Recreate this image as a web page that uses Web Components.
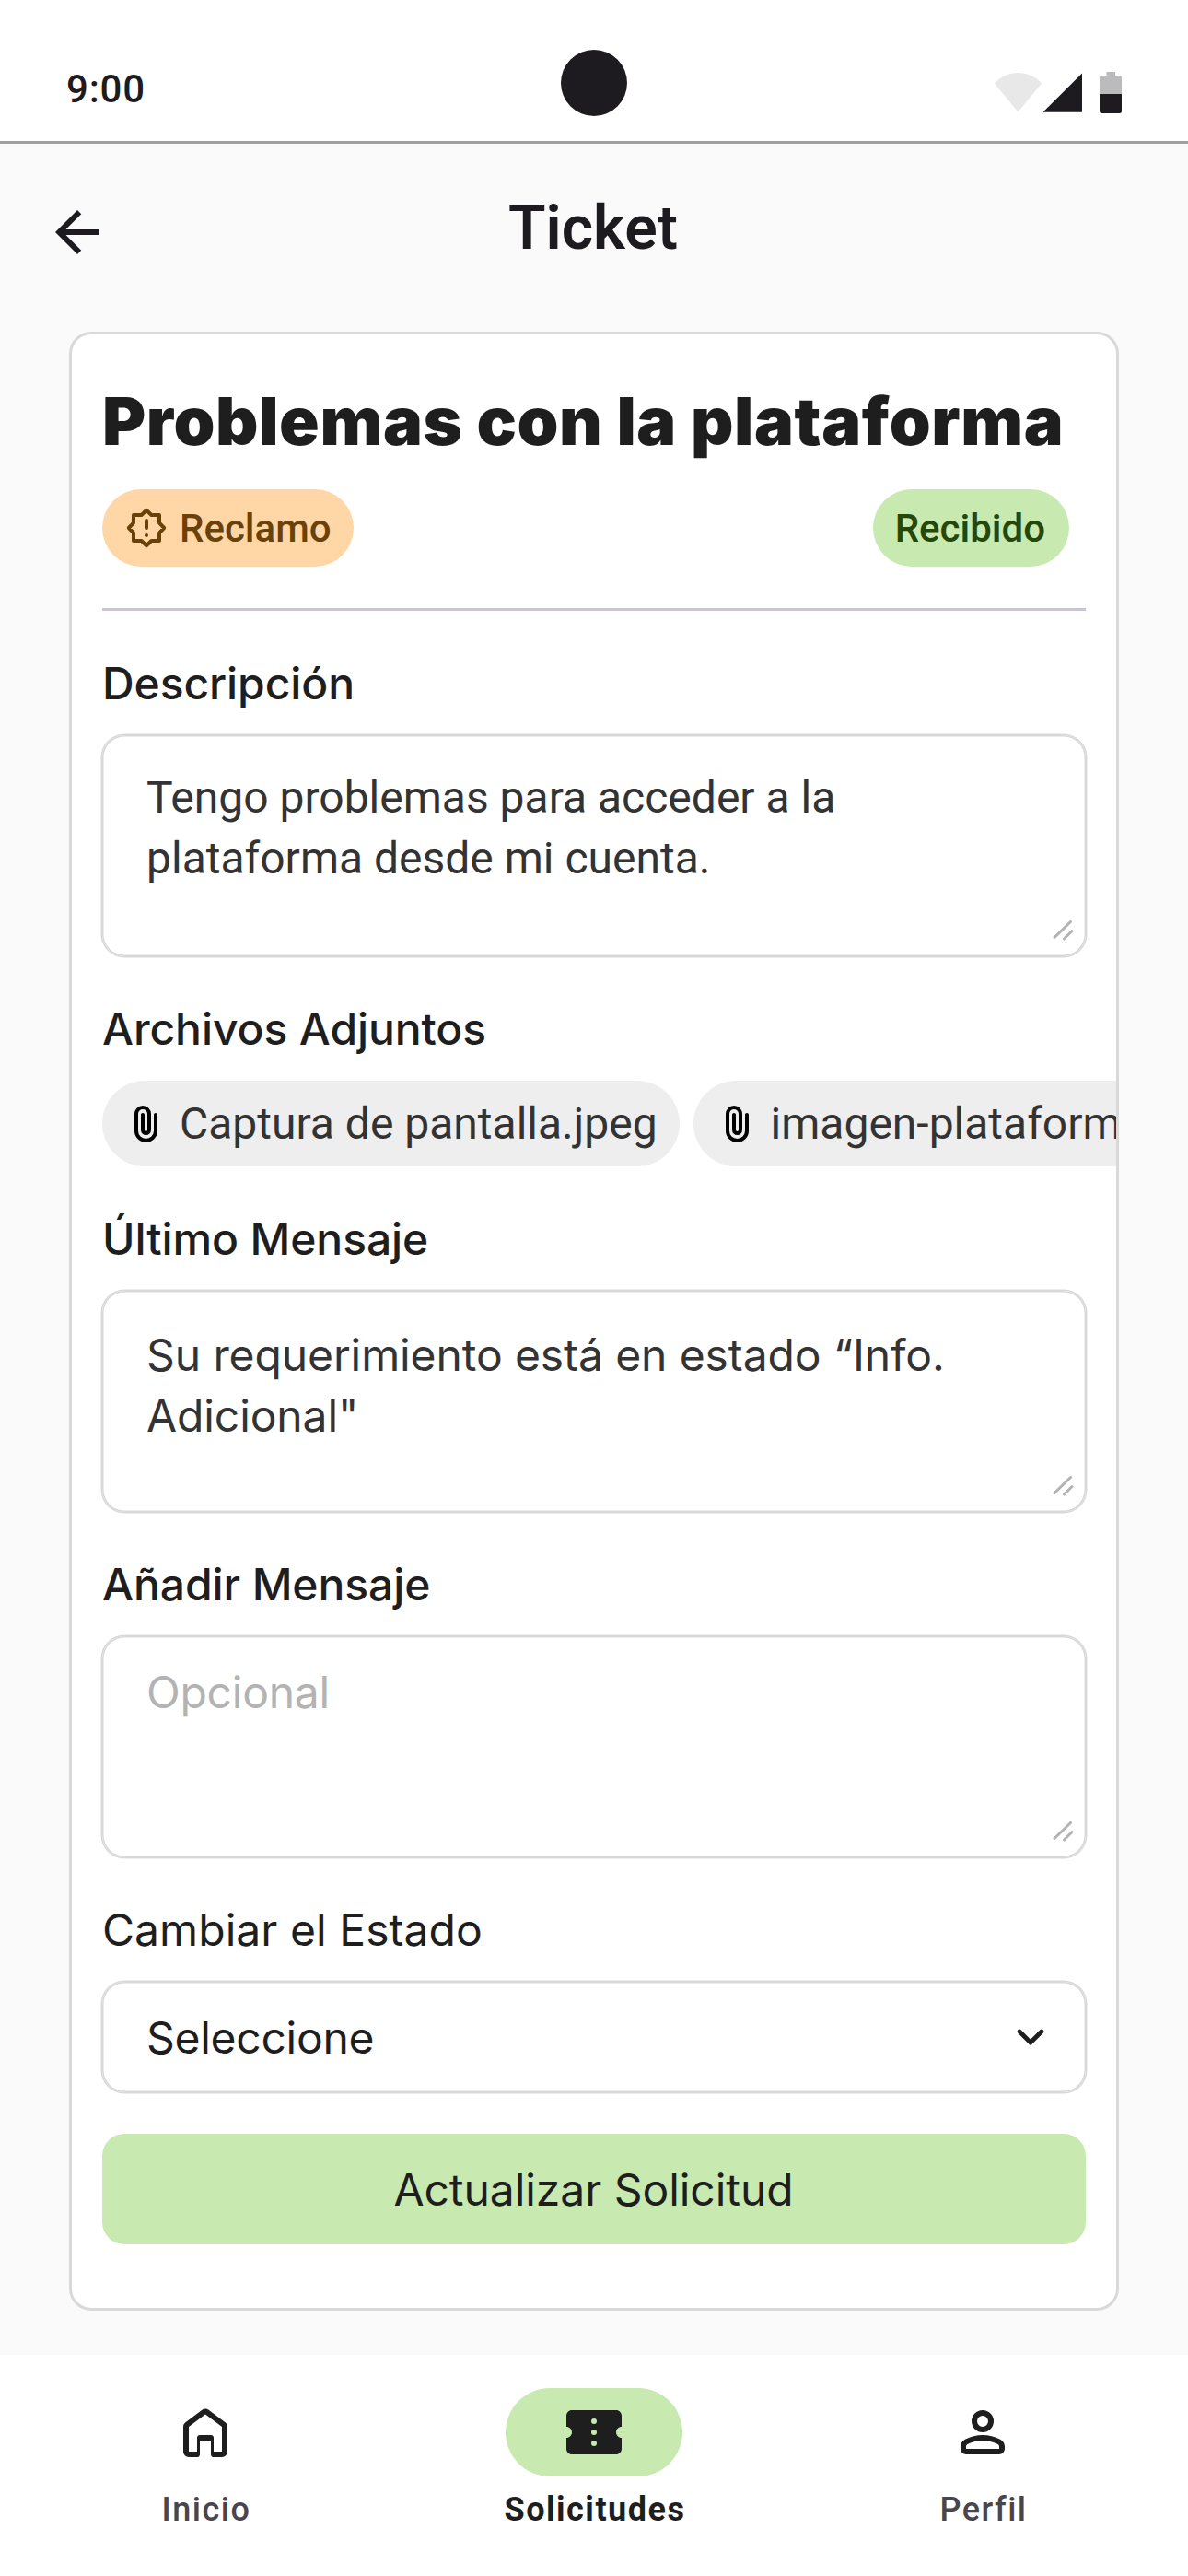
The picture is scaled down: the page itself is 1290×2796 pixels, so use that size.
<!DOCTYPE html>
<html lang="es">
<head>
<meta charset="utf-8">
<title>Ticket</title>
<style>
  html, body { margin: 0; padding: 0; }
  body { width: 1290px; height: 2796px; overflow: hidden; background: #fafafa; font-family: Inter, sans-serif; color: #1e1e1e; }
</style>
</head>
<body>
<ticket-app></ticket-app>

<script>
const define = (name, html) => {
  const template = document.createElement('template');
  template.innerHTML = html;
  customElements.define(name, class extends HTMLElement {
    constructor() {
      super();
      this.attachShadow({ mode: 'open' }).appendChild(template.content.cloneNode(true));
    }
  });
};

define('status-bar', `
  <style>
    :host { display: grid; grid-template-columns: 1fr 72px 1fr; box-sizing: border-box; height: 156px;
      padding: 54px 72px 0; background: #fff; border-bottom: 3px solid #a09f9f; }
    .time { font: 500 42px/60px Roboto, sans-serif; color: #1d1b20; letter-spacing: .8px; padding-top: 13px; }
    .camera { width: 72px; height: 72px; border-radius: 50%; background: #1d1b20; }
    .icons { justify-self: end; padding-top: 24px; }
    svg { display: block; }
  </style>
  <div class="time">9:00</div>
  <div class="camera"></div>
  <div class="icons">
    <svg width="138" height="45" viewBox="0 0 138 45">
      <path d="M0 12.5C7 5 15.500 1 25.500 1S44 5 51 12.500L25.500 43.600z" fill="#e8e8e8"/>
      <path d="M95 1.500V43.700H52.500z" fill="#1d1b20"/>
      <path d="M121.600 0h9.400v4h4.500q2.500 0 2.500 2.500V24h-24V6.500Q114 4 116.500 4h5.100z" fill="#bbbbbd"/>
      <path d="M114 24h24v18.500q0 2.500-2.500 2.500h-19q-2.500 0-2.500-2.500z" fill="#1d1b20"/>
    </svg>
  </div>`);

define('top-bar', `
  <style>
    :host { display: grid; grid-template-columns: 72px 1fr 72px; align-items: center; height: 192px; padding: 0 48px; color: #1d1b20; }
    h1 { margin: 0; padding: 0 2px 9px 0; text-align: center; font: 600 66px/84px Roboto, sans-serif; }
    svg { display: block; }
  </style>
  <svg width="72" height="72" viewBox="0 0 24 24" fill="currentColor"><path d="M20 11H7.830l5.590-5.590L12 4l-8 8 8 8 1.410-1.410L7.830 13H20z"/></svg>
  <h1><slot></slot></h1>`);

define('clip-icon', `
  <style>:host { display: block; width: 48px; height: 48px; } svg { display: block; }</style>
  <svg width="48" height="48" viewBox="0 0 24 24" fill="#000"><path d="M18 15.750q0 2.600-1.825 4.425T11.750 22t-4.425-1.825T5.500 15.750V6.500q0-1.875 1.313-3.187T10 2t3.188 1.313T14.500 6.500v8.750q0 1.150-.8 1.950t-1.950.8t-1.950-.8t-.8-1.950V7q0-.425.288-.712T10 6t.713.288T11 7v8.250q0 .325.213.538t.537.212t.538-.213t.212-.537V6.500q-.025-1.050-.737-1.775T10 4t-1.775.725T7.500 6.500v9.250q-.025 1.775 1.225 3.013T11.750 20q1.750 0 2.975-1.237T16 15.750V7q0-.425.288-.712T17 6t.713.288T18 7z"/></svg>`);

define('alert-icon', `
  <style>:host { display: block; width: 48px; height: 48px; } svg { display: block; }</style>
  <svg width="48" height="48" viewBox="0 0 24 24" fill="none" stroke="currentColor" stroke-width="2" stroke-linejoin="round" stroke-linecap="round">
    <path d="M12 2.400L14.700 5H19V9.300L21.600 12L19 14.700V19H14.700L12 21.600L9.300 19H5V14.700L2.400 12L5 9.300V5H9.300Z"/>
    <path d="M12 8v4"/><circle cx="12" cy="16" r="1" fill="currentColor" stroke="none"/>
  </svg>`);

define('status-pill', `
  <style>
    :host { display: flex; align-items: center; gap: 12px; box-sizing: border-box; height: 84px; padding: 0 24px; border-radius: 42px;
      font: 500 42px/60px Roboto, sans-serif; white-space: nowrap; }
    :host([kind="claim"]) { background: #ffd7a6; color: #6b410a; }
    :host([kind="received"]) { background: #c8e9b0; color: #24480a; padding-right: 26px; }
    span { padding-top: 2px; }
  </style>
  <slot name="icon"></slot><span><slot></slot></span>`);

define('file-chip', `
  <style>
    :host { display: flex; flex: none; align-items: center; gap: 12px; box-sizing: border-box; height: 93px; padding: 0 24px; border-radius: 46.5px;
      background: #eee; color: #333; font: 400 48px/66px Roboto, sans-serif; white-space: nowrap; }
  </style>
  <clip-icon></clip-icon><span><slot></slot></span>`);

define('form-field', `
  <style>
    :host { display: flex; flex-direction: column; gap: 23px; }
    .label { font: 500 48px/66px Inter, sans-serif; letter-spacing: -.09px; padding-top: 1px; }
    :host([light]) .label { font-weight: 400; letter-spacing: .05px; }
  </style>
  <div class="label"><slot name="label"></slot></div>
  <slot></slot>`);

define('text-box', `
  <style>
    :host { display: flex; justify-content: space-between; box-sizing: border-box; height: 240px; padding: 37px 12px 15px 48px; border-radius: 24px;
      box-shadow: 0 0 0 1.5px #d9d9d9, inset 0 0 0 1.5px #d9d9d9; font: 400 48px/66px Inter, sans-serif; letter-spacing: -.1px; color: #333; }
    :host([face="roboto"]) { font-family: Roboto, sans-serif; letter-spacing: 0; padding-top: 35px; }
    :host([empty]) { color: #b3b3b3; padding-top: 28px; letter-spacing: -.25px; }
    .text { width: 920px; }
    svg { display: block; align-self: flex-end; flex: none; }
  </style>
  <div class="text"><slot></slot></div>
  <svg width="24" height="24" viewBox="0 0 24 24" stroke="#b3b3b3" stroke-width="3" stroke-linecap="round"><path d="M2 18.500L19.500 1.500M12.500 20L21 11.500"/></svg>`);

define('select-box', `
  <style>
    :host { display: flex; justify-content: space-between; align-items: center; box-sizing: border-box; height: 120px; padding: 0 36px 0 48px; border-radius: 24px;
      box-shadow: 0 0 0 1.5px #d9d9d9, inset 0 0 0 1.5px #d9d9d9; font: 400 48px/66px Inter, sans-serif; letter-spacing: -.27px; }
    span { padding-top: 2px; }
    svg { display: block; }
  </style>
  <span><slot></slot></span>
  <svg width="48" height="48" viewBox="0 0 16 16" fill="none" stroke="#1e1e1e" stroke-width="1.600" stroke-linecap="round" stroke-linejoin="round"><path d="M4 6l4 4 4-4"/></svg>`);

define('primary-button', `
  <style>
    :host { display: flex; justify-content: center; align-items: center; height: 120px; border-radius: 24px; background: #c8e9b0;
      font: 400 48px/66px Inter, sans-serif; letter-spacing: -.05px; }
    span { padding: 2px 1px 0 0; }
  </style>
  <span><slot></slot></span>`);

define('ticket-card', `
  <style>
    :host { display: flex; flex-direction: column; gap: 45px; box-sizing: border-box; width: 1140px; height: 2148px; margin: 12px 75px 0;
      padding: 50px 33px 0; border: 3px solid #d9d9d9; border-radius: 24px; background: #fff; }
    .head { display: flex; flex-direction: column; gap: 31px; }
    h2 { margin: 0; font: 900 72px/87px Inter, sans-serif; letter-spacing: .62px; white-space: nowrap; }
    .pills { display: flex; justify-content: space-between; padding-right: 18px; }
    .rule { height: 3px; background: #cac4d0; }
    .files { display: flex; gap: 15px; margin-right: -33px; overflow: hidden; }
  </style>
  <div class="head">
    <h2>Problemas con la plataforma</h2>
    <div class="pills">
      <status-pill kind="claim"><alert-icon slot="icon"></alert-icon>Reclamo</status-pill>
      <status-pill kind="received">Recibido</status-pill>
    </div>
  </div>
  <div class="rule"></div>
  <form-field><span slot="label">Descripción</span><text-box face="roboto">Tengo problemas para acceder a la<br>plataforma desde mi cuenta.</text-box></form-field>
  <form-field><span slot="label">Archivos Adjuntos</span><div class="files"><file-chip>Captura de pantalla.jpeg</file-chip><file-chip>imagen-plataforma</file-chip></div></form-field>
  <form-field><span slot="label">Último Mensaje</span><text-box>Su requerimiento está en estado “Info.<br>Adicional"</text-box></form-field>
  <form-field><span slot="label">Añadir Mensaje</span><text-box empty>Opcional</text-box></form-field>
  <form-field light><span slot="label">Cambiar el Estado</span><select-box>Seleccione</select-box></form-field>
  <primary-button>Actualizar Solicitud</primary-button>`);

define('nav-item', `
  <style>
    :host { display: flex; flex: 1; flex-direction: column; align-items: center; gap: 12px; padding-top: 36px;
      font: 500 36px/48px Roboto, sans-serif; letter-spacing: 1.5px; color: #49454f; }
    :host([active]) { font-weight: 700; color: #1e1e1e; }
    .pill { display: flex; align-items: center; justify-content: center; width: 192px; height: 96px; border-radius: 48px; color: #1e1e1e; }
    :host([active]) .pill { background: #c8e9b0; }
    .text { padding-left: 2px; }
    ::slotted(svg) { display: block; width: 72px; height: 72px; }
  </style>
  <div class="pill"><slot name="icon"></slot></div>
  <span class="text"><slot></slot></span>`);

define('bottom-nav', `
  <style>
    :host { display: flex; gap: 24px; box-sizing: border-box; height: 240px; margin-top: 48px; padding: 0 24px; background: #fff; }
  </style>
  <nav-item><svg slot="icon" viewBox="0 0 24 24" fill="currentColor"><path d="M6 19h3v-5q0-.425.288-.712T10 13h4q.425 0 .713.288T15 14v5h3v-9l-6-4.500L6 10zm-2 0v-9q0-.475.213-.9t.587-.7l6-4.500q.525-.4 1.200-.4t1.200.4l6 4.500q.375.275.588.7T20 10v9q0 .825-.588 1.413T18 21h-3q-.425 0-.712-.288T14 20v-5h-4v5q0 .425-.288.713T9 21H6q-.825 0-1.412-.587T4 19"/></svg>Inicio</nav-item>
  <nav-item active><svg slot="icon" viewBox="0 0 24 24" fill="currentColor" fill-rule="evenodd"><path d="M20 12c0-1.100.9-2 2-2V6c0-1.100-.9-2-2-2H4c-1.100 0-2 .9-2 2v4c1.100 0 2 .9 2 2s-.9 2-2 2v4c0 1.100.9 2 2 2h16c1.100 0 2-.9 2-2v-4c-1.100 0-2-.9-2-2zM12 7a1 1 0 0 1 0 2 1 1 0 0 1 0-2zM12 11a1 1 0 0 1 0 2 1 1 0 0 1 0-2zM12 15a1 1 0 0 1 0 2 1 1 0 0 1 0-2z"/></svg>Solicitudes</nav-item>
  <nav-item><svg slot="icon" viewBox="0 0 24 24" fill="currentColor"><path d="M12 12q-1.650 0-2.825-1.175T8 8t1.175-2.825T12 4t2.825 1.175T16 8t-1.175 2.825T12 12m-8 6v-.8q0-.85.438-1.562T5.600 14.550q1.550-.775 3.150-1.162T12 13t3.250.388t3.150 1.162q.725.375 1.163 1.088T20 17.200v.8q0 .825-.587 1.413T18 20H6q-.825 0-1.412-.587T4 18m2 0h12v-.8q0-.275-.137-.5t-.363-.35q-1.350-.675-2.725-1.012T12 15t-2.775.338T6.500 16.350q-.225.125-.363.35T6 17.200zm6-8q.825 0 1.413-.587T14 8t-.587-1.412T12 6t-1.412.588T10 8t.588 1.413T12 10"/></svg>Perfil</nav-item>`);

define('ticket-app', `
  <style>:host { display: flex; flex-direction: column; width: 1290px; height: 2796px; background: #fafafa; }</style>
  <status-bar></status-bar>
  <top-bar>Ticket</top-bar>
  <ticket-card></ticket-card>
  <bottom-nav></bottom-nav>`);
</script>
</body>
</html>
